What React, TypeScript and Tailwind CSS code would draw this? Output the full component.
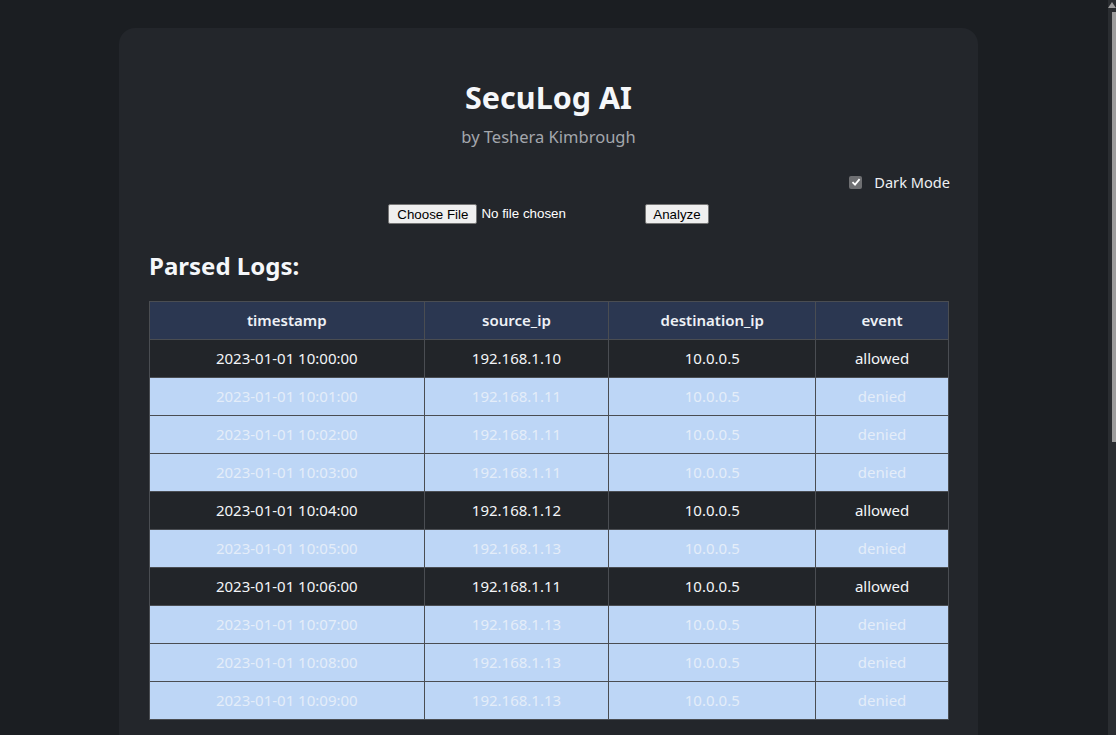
import React from "react";

const rows = [
  ["2023-01-01 10:00:00", "192.168.1.10", "10.0.0.5", "allowed"],
  ["2023-01-01 10:01:00", "192.168.1.11", "10.0.0.5", "denied"],
  ["2023-01-01 10:02:00", "192.168.1.11", "10.0.0.5", "denied"],
  ["2023-01-01 10:03:00", "192.168.1.11", "10.0.0.5", "denied"],
  ["2023-01-01 10:04:00", "192.168.1.12", "10.0.0.5", "allowed"],
  ["2023-01-01 10:05:00", "192.168.1.13", "10.0.0.5", "denied"],
  ["2023-01-01 10:06:00", "192.168.1.11", "10.0.0.5", "allowed"],
  ["2023-01-01 10:07:00", "192.168.1.13", "10.0.0.5", "denied"],
  ["2023-01-01 10:08:00", "192.168.1.13", "10.0.0.5", "denied"],
  ["2023-01-01 10:09:00", "192.168.1.13", "10.0.0.5", "denied"],
];

const font = { fontFamily: '"Noto Sans", "Open Sans", sans-serif' };

export default function App() {
  return (
    <div
      className="relative h-[735px] overflow-hidden bg-[#1b1e22] text-white"
      style={font}
    >
      <div className="w-[1097px] pt-[28px]">
        <div className="mx-auto w-[859px] rounded-[16px] bg-[#23262b] px-[30px] pt-[45px] pb-10">
          <h1 className="text-center text-[30.5px] font-bold leading-[48px] text-[#f5f7fa]">
            SecuLog AI
          </h1>
          <p className="mt-[4px] text-center text-[16.5px] leading-[24px] text-[#a3a7ad]">
            by Teshera Kimbrough
          </p>
          <div className="mt-[23px] -mr-[2px] flex items-center justify-end gap-[12px]">
            <span className="flex h-[13px] w-[13px] items-center justify-center rounded-[2px] bg-[#6e6f72]">
              <svg width="10" height="10" viewBox="0 0 10 10">
                <path
                  d="M1.5 5.2 L4 7.6 L8.6 2.2"
                  fill="none"
                  stroke="#fff"
                  strokeWidth="1.8"
                />
              </svg>
            </span>
            <span className="text-[14.6px] leading-[20px] text-[#eef0f3]">Dark Mode</span>
          </div>
          <div
            className="mt-[12px] flex items-center justify-center text-[13.33px]"
            style={{ fontFamily: '"Liberation Sans", Arial, sans-serif' }}
          >
            <div className="flex w-[253px] items-center">
              <button className="h-[20px] rounded-[2px] border border-[#767676] bg-[#efefef] px-[8px] text-[13.33px] leading-[15px] text-black">
                Choose File
              </button>
              <span className="ml-[4px] text-white">No file chosen</span>
            </div>
            <button className="ml-[4px] h-[20px] rounded-[2px] border border-[#767676] bg-[#efefef] px-[7px] text-[13.33px] leading-[15px] text-black">
              Analyze
            </button>
          </div>
          <h2 className="mt-[26px] text-[24px] font-bold leading-[32px] text-[#f5f7fa]">
            Parsed Logs:
          </h2>
          <table className="mt-[19px] w-[800px] border-collapse text-[15px]">
            <colgroup>
              <col className="w-[275px]" />
              <col className="w-[185px]" />
              <col className="w-[207px]" />
              <col className="w-[133px]" />
            </colgroup>
            <thead>
              <tr className="bg-[#2b3751]">
                {["timestamp", "source_ip", "destination_ip", "event"].map((h) => (
                  <th
                    key={h}
                    className="h-[38px] border border-[#4a4d52] p-0 text-center font-semibold text-[#eef1f6]"
                  >
                    {h}
                  </th>
                ))}
              </tr>
            </thead>
            <tbody>
              {rows.map((r, i) => {
                const denied = r[3] === "denied";
                return (
                  <tr
                    key={i}
                    className={denied ? "bg-[#bdd6f6] text-[#e4edf9]" : "bg-[#222529] text-[#f3f5f8]"}
                  >
                    {r.map((c, j) => (
                      <td
                        key={j}
                        className="h-[38px] border border-[#4a4d52] p-0 text-center"
                      >
                        {c}
                      </td>
                    ))}
                  </tr>
                );
              })}
            </tbody>
          </table>
        </div>
      </div>
      <div className="absolute right-0 top-0 h-full w-[8px] bg-[#2a2d31]">
        <div className="absolute right-0 top-[12px] h-[430px] w-[4px] bg-[#9c9c9c]" />
        <div className="absolute right-0 top-[2px] h-0 w-0 border-x-[4px] border-b-[6px] border-x-transparent border-b-[#9c9c9c]" />
      </div>
    </div>
  );
}
